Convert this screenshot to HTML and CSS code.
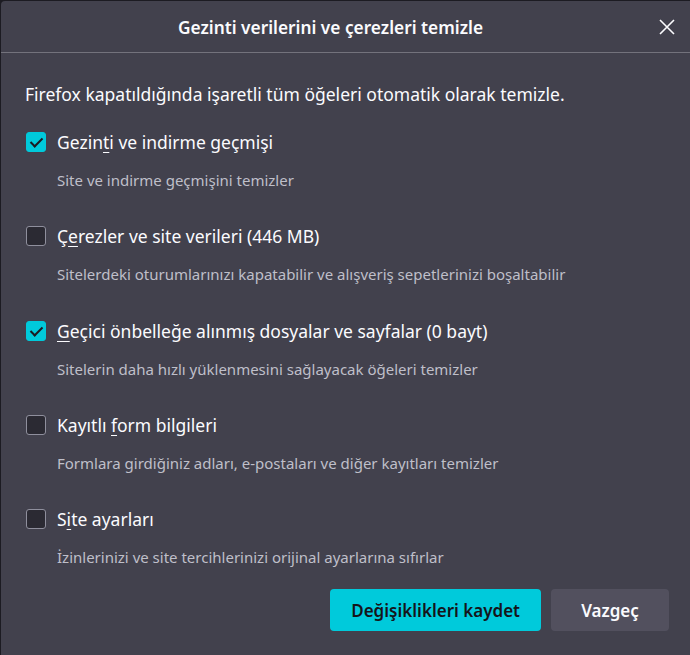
FILE: index.html
```html
<!DOCTYPE html>
<html lang="tr">
<head>
  <meta charset="UTF-8">
  <title>Gezinti verilerini ve çerezleri temizle</title>
  <link rel="stylesheet" href="styles.css">
</head>
<body>
  <div class="dialog">
    <div class="header">
      <h1>Gezinti verilerini ve çerezleri temizle</h1>
      <button class="close" aria-label="Kapat">
        <svg width="16" height="16" viewBox="0 0 16 16">
          <path d="M1 1 L15 15 M15 1 L1 15" stroke="#fbfbfe" stroke-width="1.6" fill="none"/>
        </svg>
      </button>
    </div>

    <div class="content">
      <p class="intro">Firefox kapatıldığında işaretli tüm öğeleri otomatik olarak temizle.</p>

      <div class="item">
        <label><span class="box checked"></span><span>Gezin<u>t</u>i ve indirme geçmişi</span></label>
        <p class="desc">Site ve indirme geçmişini temizler</p>
      </div>

      <div class="item">
        <label><span class="box"></span><span>Ç<u>e</u>rezler ve site verileri (446 MB)</span></label>
        <p class="desc">Sitelerdeki oturumlarınızı kapatabilir ve alışveriş sepetlerinizi boşaltabilir</p>
      </div>

      <div class="item">
        <label><span class="box checked"></span><span><u>G</u>eçici önbelleğe alınmış dosyalar ve sayfalar (0 bayt)</span></label>
        <p class="desc">Sitelerin daha hızlı yüklenmesini sağlayacak öğeleri temizler</p>
      </div>

      <div class="item">
        <label><span class="box"></span><span>Kayıtlı <u>f</u>orm bilgileri</span></label>
        <p class="desc">Formlara girdiğiniz adları, e-postaları ve diğer kayıtları temizler</p>
      </div>

      <div class="item">
        <label><span class="box"></span><span>S<u>i</u>te ayarları</span></label>
        <p class="desc">İzinlerinizi ve site tercihlerinizi orijinal ayarlarına sıfırlar</p>
      </div>
    </div>

    <div class="footer">
      <button class="btn primary">Değişiklikleri kaydet</button>
      <button class="btn">Vazgeç</button>
    </div>
  </div>
</body>
</html>
```

FILE: styles.css
```css
* {
  margin: 0;
  padding: 0;
  box-sizing: border-box;
}

body {
  background: #1c1b22;
  font-family: "Noto Sans", "Open Sans", sans-serif;
  color: #fbfbfe;
  height: 655px;
  overflow: hidden;
}

.dialog {
  margin: 1px 0 0 1px;
  height: 654px;
  background: #42414d;
  border-top-left-radius: 4px;
  display: flex;
  flex-direction: column;
}

.header {
  height: 52px;
  padding-right: 30px;
  border-bottom: 1px solid #73727c;
  display: flex;
  align-items: center;
  justify-content: center;
  position: relative;
}

.header h1 {
  font-size: 17.3px;
  font-weight: 600;
  padding-top: 2px;
}

.close {
  position: absolute;
  right: 15px;
  top: 18px;
  background: none;
  border: none;
  width: 16px;
  height: 16px;
}

.content {
  padding: 29px 0 0 24px;
}

.intro {
  font-size: 17.5px;
  line-height: 24px;
  margin-bottom: 24px;
}

.item {
  margin-bottom: 34.25px;
}

.item label {
  display: flex;
  align-items: center;
  font-size: 17.5px;
  line-height: 24px;
}

.item u {
  text-underline-offset: 3px;
}

.box {
  flex: none;
  width: 20px;
  height: 20px;
  margin: 0 11px 0 1px;
  border: 1px solid #8f8f9d;
  border-radius: 3px;
  background: #2b2a33;
  position: relative;
}

.box.checked {
  background: #00cadb;
  border-color: #00cadb;
}

.box.checked::after {
  content: "";
  position: absolute;
  left: 6px;
  top: 2px;
  width: 5px;
  height: 10px;
  border: solid #1c1b22;
  border-width: 0 2.5px 2.5px 0;
  transform: rotate(45deg);
}

.desc {
  margin: 16px 0 0 32px;
  font-size: 15px;
  line-height: 20px;
  color: #bfbfc9;
}

.footer {
  display: flex;
  justify-content: flex-end;
  gap: 10px;
  padding: 0 21px 0 0;
  margin-top: -12px;
}

.btn {
  height: 42px;
  min-width: 118px;
  padding: 0 21px;
  border: none;
  border-radius: 4px;
  background: #52505e;
  color: #fbfbfe;
  font-family: inherit;
  font-size: 17px;
  font-weight: 600;
}

.btn.primary {
  background: #00cadb;
  color: #15141a;
}
```
